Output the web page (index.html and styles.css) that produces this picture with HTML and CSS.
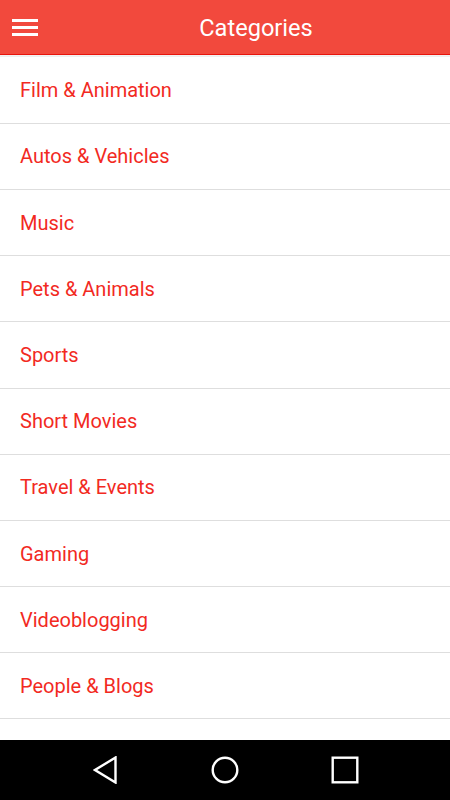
FILE: index.html
```html
<!DOCTYPE html>
<html>
<head>
<meta charset="utf-8">
<link rel="stylesheet" href="styles.css">
</head>
<body>
<div class="screen">
  <header class="appbar">
    <div class="menu">
      <svg width="26" height="18" viewBox="0 0 26 18"><rect x="0" y="1" width="26" height="3" fill="#fff"/><rect x="0" y="8" width="26" height="3" fill="#fff"/><rect x="0" y="15" width="26" height="3" fill="#fff"/></svg>
    </div>
    <h1 class="title">Categories</h1>
  </header>
  <div class="shadow"></div>
  <ul class="list">
    <li class="item">Film &amp; Animation</li>
    <li class="item">Autos &amp; Vehicles</li>
    <li class="item">Music</li>
    <li class="item">Pets &amp; Animals</li>
    <li class="item">Sports</li>
    <li class="item">Short Movies</li>
    <li class="item">Travel &amp; Events</li>
    <li class="item">Gaming</li>
    <li class="item">Videoblogging</li>
    <li class="item">People &amp; Blogs</li>
  </ul>
  <nav class="navbar">
    <svg class="nav-icon" width="26" height="28" viewBox="0 0 26 28"><path d="M22.5 1.5 L2 14 L22.5 26.5 Z" fill="none" stroke="#fff" stroke-width="2.4" stroke-linejoin="miter"/></svg>
    <svg class="nav-icon" width="28" height="28" viewBox="0 0 28 28"><circle cx="14" cy="14" r="12.3" fill="none" stroke="#fff" stroke-width="2.4"/></svg>
    <svg class="nav-icon" width="28" height="28" viewBox="0 0 28 28"><rect x="1.7" y="1.7" width="24.6" height="24.6" fill="none" stroke="#fff" stroke-width="2.4"/></svg>
  </nav>
</div>
</body>
</html>
```
FILE: styles.css
```css
* { box-sizing: border-box; }
html, body { margin: 0; padding: 0; }
body {
  font-family: Roboto, "Noto Sans", sans-serif;
  background: #fff;
}
.screen {
  width: 450px;
  height: 800px;
  display: flex;
  flex-direction: column;
  overflow: hidden;
}
.appbar {
  height: 55px;
  flex: none;
  background: #f2493d;
  border-bottom: 1px solid #e8140c;
  display: flex;
  align-items: center;
}
.menu {
  width: 62px;
  height: 54px;
  display: flex;
  align-items: center;
  padding-left: 12px;
  padding-bottom: 1px;
}
.menu svg { display: block; }
.title {
  flex: 1;
  margin: 0;
  text-align: center;
  color: #fff;
  font-weight: 400;
  font-size: 23.6px;
  line-height: 54px;
  padding-top: 2px;
}
.shadow {
  height: 2px;
  flex: none;
  background: linear-gradient(#f4f4f4, #ececec);
}
.list {
  list-style: none;
  margin: 0;
  padding: 0.6px 0 0;
  flex: 1;
}
.item {
  height: 66.2px;
  border-bottom: 1.2px solid #dedede;
  padding-left: 20px;
  display: flex;
  align-items: center;
  color: #f22a1f;
  font-size: 20px;
}
.navbar {
  height: 60px;
  flex: none;
  background: #000;
  display: flex;
  align-items: center;
  padding-bottom: 1px;
}
.nav-icon { display: block; flex: none; }
.nav-icon:nth-child(1) { margin-left: 93px; }
.nav-icon:nth-child(2) { margin-left: 92px; }
.nav-icon:nth-child(3) { margin-left: 92px; }
```
